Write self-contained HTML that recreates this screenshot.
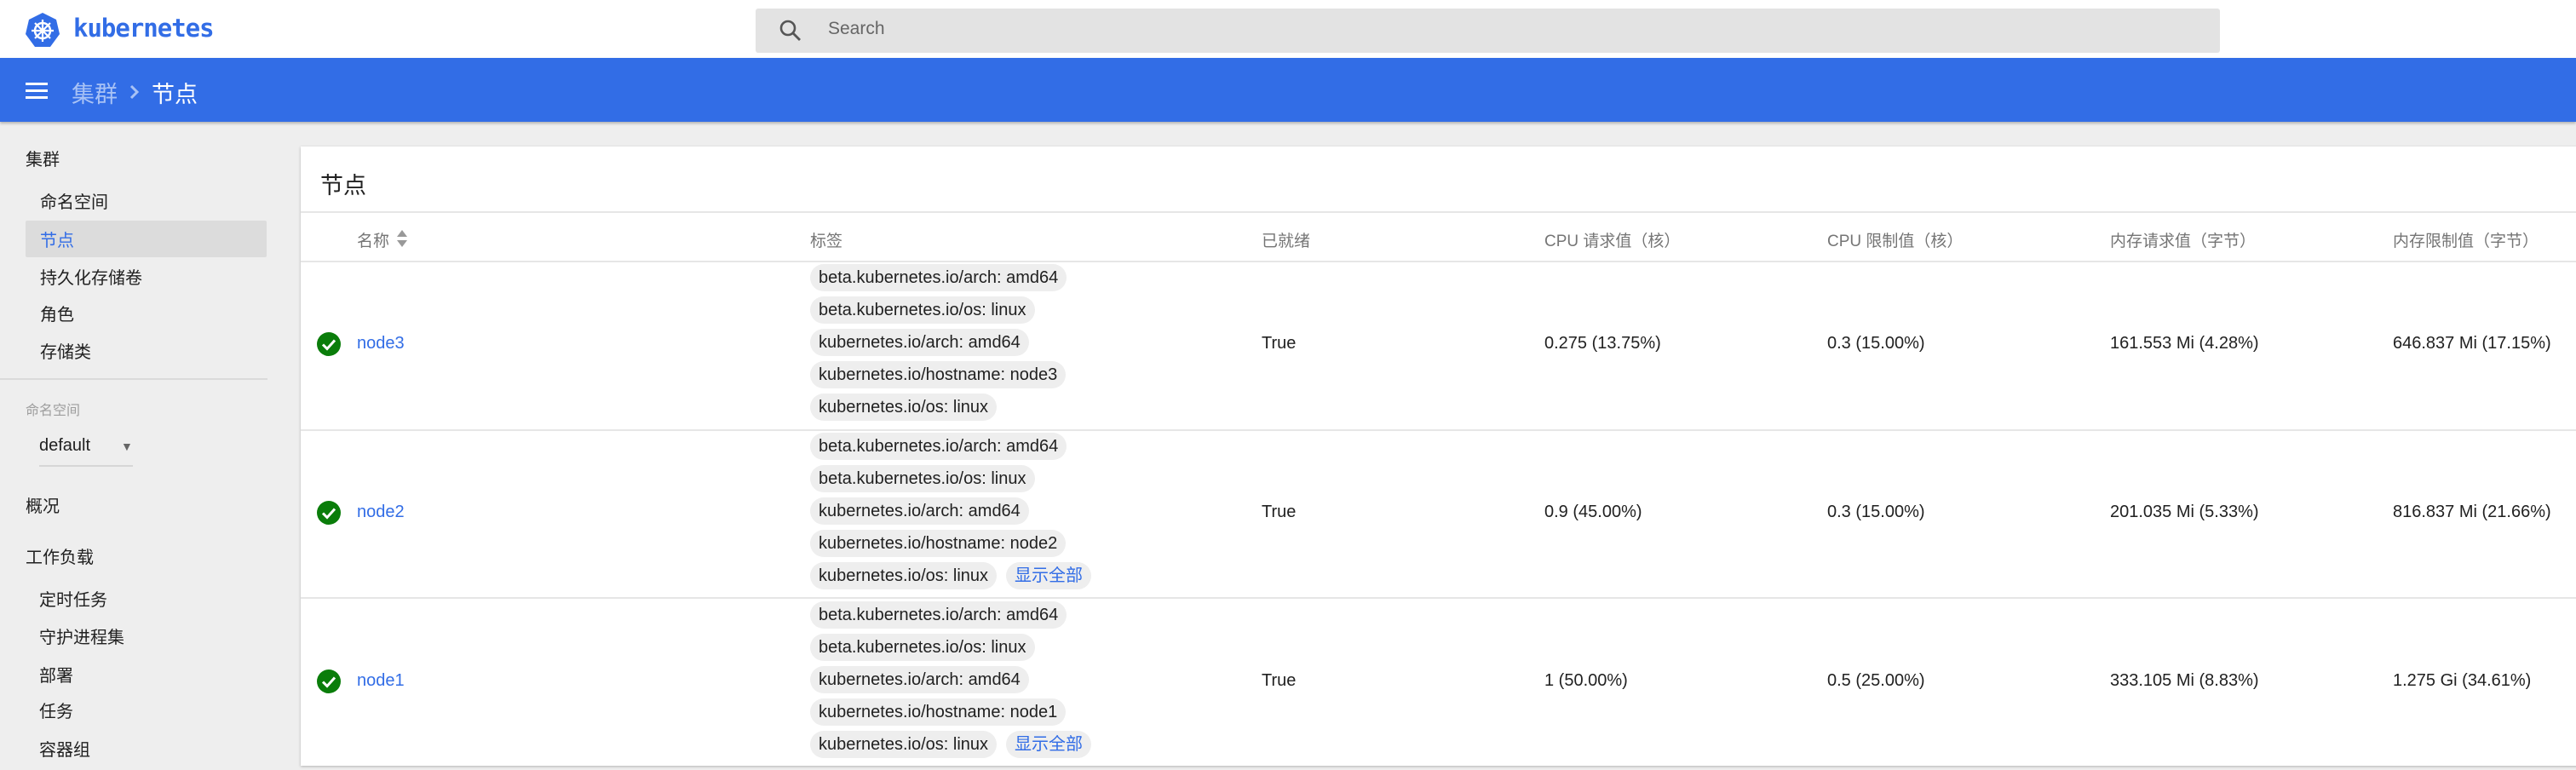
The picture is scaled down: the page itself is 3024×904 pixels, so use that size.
<!DOCTYPE html>
<html><head><meta charset="utf-8"><style>
*{margin:0;padding:0;box-sizing:border-box}
body{width:3024px;height:904px;overflow:hidden;background:#eeeeee;font-family:"Liberation Sans","Noto Sans CJK SC",sans-serif;color:#212121;position:relative;font-size:20px}
.a{position:absolute;white-space:nowrap}
#top{position:absolute;left:0;top:0;width:3024px;height:68px;background:#fff}
#bar{position:absolute;left:0;top:68px;width:3024px;height:75px;background:#326de6;box-shadow:0 2px 3px rgba(0,0,0,.25)}
#search{position:absolute;left:887px;top:10px;width:1719px;height:52px;background:#e3e3e3;border-radius:3px}
.side{position:absolute;font-size:20px;color:#212121}
#card{position:absolute;left:353px;top:172px;width:2690px;height:727px;background:#fff;box-shadow:0 1px 3px rgba(0,0,0,.25)}
.hl{position:absolute;left:0;width:2690px;height:2px;background:#e6e6e6}
.chip{position:absolute;height:32px;line-height:32px;padding:0 10px;background:#eeeeee;border-radius:16px;font-size:20px;color:#212121;white-space:nowrap}
.hd{position:absolute;top:96px;font-size:19px;color:#757575;white-space:nowrap}
.cell{position:absolute;font-size:20px;white-space:nowrap}
.lnk{color:#326de6}
</style></head><body>
<div id="top"></div>
<svg class="a" style="left:28px;top:14px" width="44" height="43" viewBox="0 0 44 43"><polygon points="22,1 38,9 42,26 31,41 13,41 2,26 6,9" fill="#326de6"/><circle cx="22" cy="22" r="9" fill="none" stroke="#fff" stroke-width="2.5"/><g stroke="#fff" stroke-width="2.2"><line x1="22" y1="9" x2="22" y2="35"/><line x1="9" y1="22" x2="35" y2="22"/><line x1="13" y1="13" x2="31" y2="31"/><line x1="31" y1="13" x2="13" y2="31"/></g><circle cx="22" cy="22" r="3" fill="#fff"/></svg>
<div class="a" style="left:86px;top:16px;font-size:29px;color:#326de6;font-family:'DejaVu Sans Mono','Liberation Mono',monospace;font-weight:bold;letter-spacing:-1px">kubernetes</div>
<div id="search"></div>
<svg class="a" style="left:914px;top:22px" width="28" height="28" viewBox="0 0 28 28"><circle cx="11" cy="11" r="8" fill="none" stroke="#555" stroke-width="2.6"/><line x1="17" y1="17" x2="25" y2="25" stroke="#555" stroke-width="2.8"/></svg>
<div class="a" style="left:972px;top:22px;font-size:21px;color:#666">Search</div>
<div id="bar"></div>
<div class="a" style="left:30px;top:97px;width:26px;height:3px;background:#fff;box-shadow:0 8px 0 #fff,0 16px 0 #fff"></div>
<div class="a" style="left:84px;top:89px;font-size:27px;color:#a8c2f5">集群</div>
<svg class="a" style="left:151px;top:98px" width="14" height="20" viewBox="0 0 14 20"><path d="M3 3l7 7-7 7" fill="none" stroke="#a8c2f5" stroke-width="3"/></svg>
<div class="a" style="left:178px;top:89px;font-size:27px;color:#fff">节点</div>

<div class="side" style="left:30px;top:171px">集群</div>
<div class="side" style="left:47px;top:221px">命名空间</div>
<div class="a" style="left:30px;top:259px;width:283px;height:43px;background:#dcdcdc;border-radius:2px"></div>
<div class="side" style="left:47px;top:266px;color:#326de6">节点</div>
<div class="side" style="left:47px;top:310px">持久化存储卷</div>
<div class="side" style="left:47px;top:353px">角色</div>
<div class="side" style="left:47px;top:397px">存储类</div>
<div class="a" style="left:0;top:444px;width:314px;height:2px;background:#dadada"></div>
<div class="side" style="left:30px;top:468px;font-size:16px;color:#9e9e9e">命名空间</div>
<div class="side" style="left:46px;top:512px">default</div>
<div class="a" style="left:142px;top:516px;font-size:14px;color:#666">▼</div>
<div class="a" style="left:46px;top:546px;width:110px;height:2px;background:#d6d6d6"></div>
<div class="side" style="left:30px;top:578px">概况</div>
<div class="side" style="left:30px;top:638px">工作负载</div>
<div class="side" style="left:46px;top:688px">定时任务</div>
<div class="side" style="left:46px;top:732px">守护进程集</div>
<div class="side" style="left:46px;top:777px">部署</div>
<div class="side" style="left:46px;top:819px">任务</div>
<div class="side" style="left:46px;top:864px">容器组</div>

<div id="card">
<div class="a" style="left:23px;top:24px;font-size:27px;color:#212121">节点</div>
<div class="hl" style="top:76px"></div>
<div class="hd" style="left:66px">名称</div>
<svg class="a" style="left:112px;top:97px" width="14" height="22" viewBox="0 0 14 22"><path d="M7 1l6 8H1z" fill="#999"/><path d="M7 21l6-8H1z" fill="#999"/></svg>
<div class="hd" style="left:598px">标签</div>
<div class="hd" style="left:1128px">已就绪</div>
<div class="hd" style="left:1460px">CPU 请求值（核）</div>
<div class="hd" style="left:1792px">CPU 限制值（核）</div>
<div class="hd" style="left:2124px">内存请求值（字节）</div>
<div class="hd" style="left:2456px">内存限制值（字节）</div>
<div class="hl" style="top:134px"></div>
<div class="hl" style="top:332px"></div>
<div class="hl" style="top:529px"></div>

<svg class="a" style="left:19px;top:218px" width="28" height="28" viewBox="0 0 28 28"><circle cx="14" cy="14" r="14" fill="#0a7d0a"/><path d="M7 14.5l5 5 9-10" fill="none" stroke="#fff" stroke-width="3"/></svg>
<div class="cell lnk" style="left:66px;top:220px">node3</div>
<div class="chip" style="left:598px;top:138px">beta.kubernetes.io/arch: amd64</div>
<div class="chip" style="left:598px;top:176px">beta.kubernetes.io/os: linux</div>
<div class="chip" style="left:598px;top:214px">kubernetes.io/arch: amd64</div>
<div class="chip" style="left:598px;top:252px">kubernetes.io/hostname: node3</div>
<div class="chip" style="left:598px;top:290px">kubernetes.io/os: linux</div>
<div class="cell" style="left:1128px;top:220px">True</div>
<div class="cell" style="left:1460px;top:220px">0.275 (13.75%)</div>
<div class="cell" style="left:1792px;top:220px">0.3 (15.00%)</div>
<div class="cell" style="left:2124px;top:220px">161.553 Mi (4.28%)</div>
<div class="cell" style="left:2456px;top:220px">646.837 Mi (17.15%)</div>

<svg class="a" style="left:19px;top:416px" width="28" height="28" viewBox="0 0 28 28"><circle cx="14" cy="14" r="14" fill="#0a7d0a"/><path d="M7 14.5l5 5 9-10" fill="none" stroke="#fff" stroke-width="3"/></svg>
<div class="cell lnk" style="left:66px;top:418px">node2</div>
<div class="chip" style="left:598px;top:336px">beta.kubernetes.io/arch: amd64</div>
<div class="chip" style="left:598px;top:374px">beta.kubernetes.io/os: linux</div>
<div class="chip" style="left:598px;top:412px">kubernetes.io/arch: amd64</div>
<div class="chip" style="left:598px;top:450px">kubernetes.io/hostname: node2</div>
<div class="chip" style="left:598px;top:488px">kubernetes.io/os: linux</div>
<div class="chip lnk" style="left:828px;top:488px">显示全部</div>
<div class="cell" style="left:1128px;top:418px">True</div>
<div class="cell" style="left:1460px;top:418px">0.9 (45.00%)</div>
<div class="cell" style="left:1792px;top:418px">0.3 (15.00%)</div>
<div class="cell" style="left:2124px;top:418px">201.035 Mi (5.33%)</div>
<div class="cell" style="left:2456px;top:418px">816.837 Mi (21.66%)</div>

<svg class="a" style="left:19px;top:614px" width="28" height="28" viewBox="0 0 28 28"><circle cx="14" cy="14" r="14" fill="#0a7d0a"/><path d="M7 14.5l5 5 9-10" fill="none" stroke="#fff" stroke-width="3"/></svg>
<div class="cell lnk" style="left:66px;top:616px">node1</div>
<div class="chip" style="left:598px;top:534px">beta.kubernetes.io/arch: amd64</div>
<div class="chip" style="left:598px;top:572px">beta.kubernetes.io/os: linux</div>
<div class="chip" style="left:598px;top:610px">kubernetes.io/arch: amd64</div>
<div class="chip" style="left:598px;top:648px">kubernetes.io/hostname: node1</div>
<div class="chip" style="left:598px;top:686px">kubernetes.io/os: linux</div>
<div class="chip lnk" style="left:828px;top:686px">显示全部</div>
<div class="cell" style="left:1128px;top:616px">True</div>
<div class="cell" style="left:1460px;top:616px">1 (50.00%)</div>
<div class="cell" style="left:1792px;top:616px">0.5 (25.00%)</div>
<div class="cell" style="left:2124px;top:616px">333.105 Mi (8.83%)</div>
<div class="cell" style="left:2456px;top:616px">1.275 Gi (34.61%)</div>
</div>
</body></html>
